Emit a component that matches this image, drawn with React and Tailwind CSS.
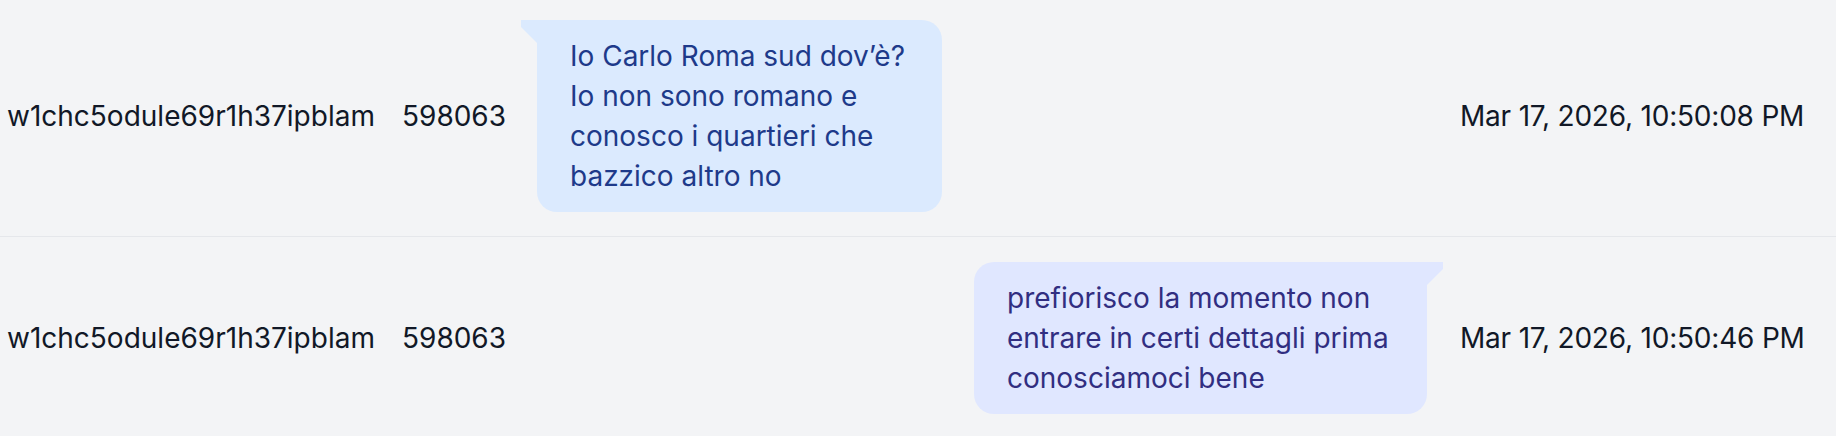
import React from "react";

function Tail({ side, color }) {
  if (side === "left") {
    return (
      <svg
        className="absolute top-0 left-[-16px]"
        width="16"
        height="24"
        viewBox="0 0 16 24"
      >
        <polygon points="0,0 16,0 16,23 0,7" fill={color} />
      </svg>
    );
  }
  return (
    <svg
      className="absolute top-0 right-[-16px]"
      width="16"
      height="24"
      viewBox="0 0 16 24"
    >
      <polygon points="0,0 16,0 16,7 0,23" fill={color} />
    </svg>
  );
}

function Row({ user, num, lines, side, time, rowClass }) {
  const isLeft = side === "left";
  return (
    <div className={`flex items-center border-b border-[#e5e7eb] ${rowClass}`}>
      <div className="w-[402px] shrink-0 pl-[7px] text-[#111827] whitespace-nowrap">
        {user}
      </div>
      <div className="w-[103px] shrink-0 text-[#111827] whitespace-nowrap">{num}</div>
      <div
        className={`w-[954px] shrink-0 px-[32px] flex ${
          isLeft ? "justify-start" : "justify-end"
        }`}
      >
        {isLeft ? (
          <div className="relative w-[405px] bg-[#dbeafe] text-[#1e3a8a] rounded-[20px] rounded-tl-none px-[33px] py-[16px] whitespace-nowrap">
            <Tail side="left" color="#dbeafe" />
            {lines.map((l, i) => (
              <div key={i}>{l}</div>
            ))}
          </div>
        ) : (
          <div className="relative w-[453px] bg-[#e0e7ff] text-[#312e81] rounded-[20px] rounded-tr-none px-[33px] py-[16px] whitespace-nowrap">
            <Tail side="right" color="#e0e7ff" />
            {lines.map((l, i) => (
              <div key={i}>{l}</div>
            ))}
          </div>
        )}
      </div>
      <div className="flex-1 pl-[1px] text-[#111827] whitespace-nowrap tracking-[-0.2px]">
        {time}
      </div>
    </div>
  );
}

export default function App() {
  return (
    <div
      className="w-[1836px] h-[436px] overflow-hidden bg-[#f3f4f6] text-[28px] leading-[40px]"
      style={{ fontFamily: "Inter, 'Noto Sans', sans-serif" }}
    >
      <Row
        rowClass="pt-[20px] pb-[24px]"
        user="w1chc5odule69r1h37ipblam"
        num="598063"
        side="left"
        lines={[
          "Io Carlo Roma sud dov’è?",
          "Io non sono romano e",
          "conosco i quartieri che",
          "bazzico altro no",
        ]}
        time="Mar 17, 2026, 10:50:08 PM"
      />
      <Row
        rowClass="pt-[25px] pb-[24px]"
        user="w1chc5odule69r1h37ipblam"
        num="598063"
        side="right"
        lines={[
          "prefiorisco la momento non",
          "entrare in certi dettagli prima",
          "conosciamoci bene",
        ]}
        time="Mar 17, 2026, 10:50:46 PM"
      />
    </div>
  );
}
